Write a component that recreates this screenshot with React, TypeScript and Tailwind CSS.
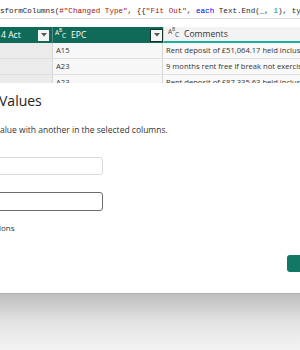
import React from "react";

const mono = { fontFamily: '"Liberation Mono", "DejaVu Sans Mono", monospace' };
const sans = { fontFamily: '"Open Sans", "Noto Sans", sans-serif' };

function Caret({ dark }: { dark?: boolean }) {
  return (
    <div
      className={
        "flex items-center justify-center w-[11px] h-[11px] bg-[#f4f4f4] " +
        (dark ? "outline outline-[1.5px] outline-[#10352c]" : "")
      }
    >
      <svg width="6" height="4" viewBox="0 0 6 4">
        <path d="M0 0 L6 0 L3 3.5 Z" fill="#555" />
      </svg>
    </div>
  );
}

function AbcIcon({ color }: { color: string }) {
  return (
    <span className="relative inline-block w-[13px] h-[11px]" style={{ color }}>
      <span className="absolute left-0 top-[1px] text-[6.5px] leading-none">A</span>
      <span className="absolute left-[4px] top-[-1px] text-[5px] leading-none">B</span>
      <span className="absolute left-[7px] top-[4px] text-[6.5px] leading-none">C</span>
    </span>
  );
}

export default function App() {
  return (
    <div className="w-[300px] h-[350px] overflow-hidden bg-white flex flex-col" style={sans}>
      {/* formula bar */}
      <div className="h-[19px] shrink-0 border-b border-[#dcdcdc] pt-[6px] whitespace-pre overflow-hidden text-[7.6px] leading-[10px] text-[#1e1e1e]" style={mono}>
        <span>sformColumns(</span>
        <span className="text-[#a31515]">#"Changed Type"</span>
        <span>{", {{"}</span>
        <span className="text-[#a31515]">"Fit Out"</span>
        <span>{", "}</span>
        <span className="text-[#0000ff]">each</span>
        <span>{" Text.End(_, "}</span>
        <span className="text-[#098658]">1</span>
        <span>{"), ty"}</span>
      </div>
      <div className="h-[8px] bg-white shrink-0" />
      {/* table */}
      <div className="h-[56px] shrink-0 overflow-hidden flex flex-col text-[7.6px]">
        <div className="h-[16px] flex shrink-0 text-[8.6px]">
          <div className="w-[53px] bg-[#0f6b57] flex items-center justify-between pl-[1px] pr-[3px] text-white border-r border-[#4a8f7f]">
            <span>4 Act</span>
            <Caret />
          </div>
          <div className="w-[110px] bg-[#0f6b57] flex items-center justify-between pl-[2px] pr-[1px] text-white">
            <span className="flex items-center gap-[3px]">
              <AbcIcon color="#ffffff" />
              <span>EPC</span>
            </span>
            <Caret dark />
          </div>
          <div className="flex-1 bg-[#f3f3f3] flex items-center pl-[4px] text-[#333] border-b-2 border-[#1bb09a] border-l border-l-[#d0d0d0]">
            <span className="flex items-center gap-[3px]">
              <AbcIcon color="#444" />
              <span>Comments</span>
            </span>
          </div>
        </div>
        {[
          ["A15", "Rent deposit of £51,064.17 held inclusive of VAT"],
          ["A23", "9 months rent free if break not exercised"],
          ["A23", "Rent deposit of £87,335.63 held inclusive of VAT"],
        ].map(([a, b], i) => (
          <div key={i} className="h-[16px] shrink-0 flex border-b border-[#dedede] text-[#333] whitespace-nowrap">
            <div className="w-[53px] bg-[#ebebeb] border-r border-[#d6d6d6]" />
            <div className="w-[110px] bg-[#f7f7f7] border-r border-[#d6d6d6] pl-[3px] flex items-center">{a}</div>
            <div className="flex-1 bg-[#f9f9f9] pl-[3px] flex items-center overflow-hidden">{b}</div>
          </div>
        ))}
      </div>
      {/* dialog */}
      <div className="h-[210px] bg-white shrink-0 relative">
        <div className="pt-[7px] text-[14px] leading-[22px] text-[#252423] ml-[-1px]">Values</div>
        <div className="mt-[12px] text-[8.5px] leading-[12px] text-[#333] whitespace-nowrap">
          alue with another in the selected columns.
        </div>
        <div className="mt-[21px] ml-[-4px] w-[107px] h-[18px] border border-[#dadada] rounded-[3px] bg-white" />
        <div className="mt-[17px] ml-[-4px] w-[107px] h-[19px] border-[1.5px] border-[#6b6b6b] rounded-[3px] bg-white" />
        <div className="mt-[11px] text-[8px] text-[#333] ml-[-1px]">ions</div>
        <div className="absolute right-[-6px] top-[172px] w-[19px] h-[17px] rounded-[3px] bg-[#117865]" />
      </div>
      {/* shadow area */}
      <div className="flex-1 bg-gradient-to-b from-[#bebebe] via-[#e3e3e3] to-[#f3f3f3] border-t border-[#b0b0b0]" />
    </div>
  );
}
